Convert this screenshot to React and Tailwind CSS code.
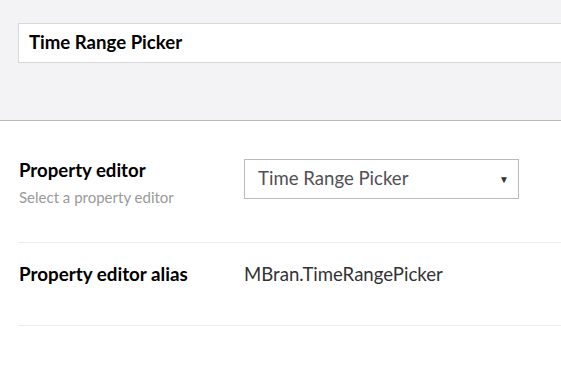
import React from 'react';

const App = () => {
  return (
    <div className="h-[369px] w-[561px] overflow-hidden bg-white font-['Lato',sans-serif]">
      <header className="h-[121px] border-b border-[#bbbbbb] bg-[#f3f3f5] pt-[23px] pl-[18px]">
        <div className="flex h-[40px] w-[600px] items-center border border-[#d8d7d9] bg-white pl-[10px] text-[18.6px] font-bold text-[#000]">
          Time Range Picker
        </div>
      </header>

      <main className="pl-[19px]">
        <div className="flex h-[122px] border-b border-[#ececee] pt-[37px]">
          <div className="w-[225px]">
            <div className="text-[18.6px] font-bold leading-[25px] text-[#000]">Property editor</div>
            <div className="mt-[4px] text-[15px] leading-[20px] text-[#9a9a9a]">Select a property editor</div>
          </div>
          <div className="mt-[1px] flex h-[40px] w-[275px] items-center justify-between border border-[#bbbbbb] pl-[13px] pr-[9px] text-[18.6px] text-[#515054]">
            <span>Time Range Picker</span>
            <span className="text-[10px] text-[#333]">▼</span>
          </div>
        </div>

        <div className="flex h-[83px] items-start border-b border-[#ececee] pt-[19px]">
          <div className="w-[225px] text-[18.8px] font-bold leading-[24px] text-[#000]">Property editor alias</div>
          <div className="text-[18.6px] leading-[24px] text-[#333]">MBran.TimeRangePicker</div>
        </div>
      </main>
    </div>
  );
};

export default App;
